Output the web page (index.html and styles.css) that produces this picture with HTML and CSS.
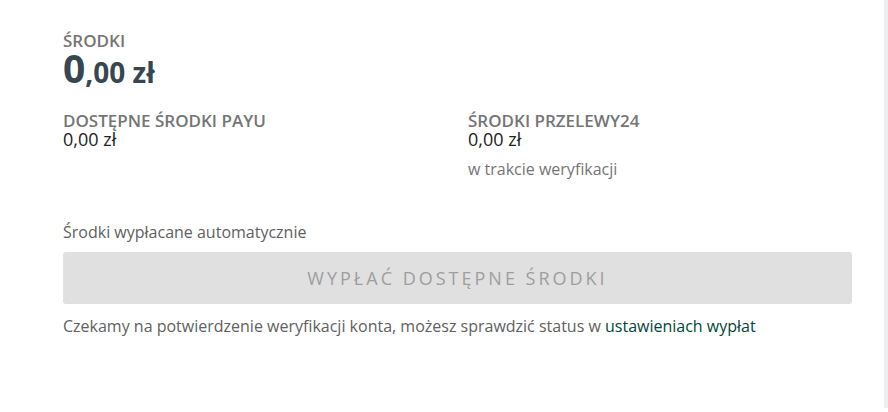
FILE: index.html
```html
<!DOCTYPE html>
<html lang="pl">
<head>
<meta charset="utf-8">
<link rel="stylesheet" href="styles.css">
</head>
<body>
<div class="page">
  <main class="panel">
    <section class="total">
      <div class="label">ŚRODKI</div>
      <div class="amount"><span class="int">0</span><span class="frac">,00 zł</span></div>
    </section>
    <section class="sources">
      <div class="source">
        <div class="label">DOSTĘPNE ŚRODKI PAYU</div>
        <div class="value">0,00 zł</div>
      </div>
      <div class="source">
        <div class="label">ŚRODKI PRZELEWY24</div>
        <div class="value">0,00 zł</div>
        <div class="status">w trakcie weryfikacji</div>
      </div>
    </section>
    <p class="auto">Środki wypłacane automatycznie</p>
    <button class="payout" disabled>WYPŁAĆ DOSTĘPNE ŚRODKI</button>
    <p class="note">Czekamy na potwierdzenie weryfikacji konta, możesz sprawdzić status w <a href="#" class="link">ustawieniach wypłat</a></p>
  </main>
  <div class="scrollbar"></div>
</div>
</body>
</html>
```

FILE: styles.css
```css
html, body {
  margin: 0;
  padding: 0;
  background: #ffffff;
}
body {
  font-family: "Open Sans", "Noto Sans", sans-serif;
  color: #212121;
}
.page {
  display: flex;
  width: 888px;
  height: 412px;
}
.panel {
  flex: 1;
  padding: 31px 32px 0 63px;
}
.scrollbar {
  width: 4px;
  height: 408px;
  background: #eceef1;
}
.label {
  font-size: 17px;
  font-weight: 600;
  color: #757575;
  line-height: 20px;
}
.amount {
  color: #37474f;
  font-weight: 700;
  font-size: 39px;
  line-height: 34px;
}
.amount .frac {
  font-size: 28px;
}
.sources {
  display: grid;
  grid-template-columns: 405px 1fr;
  margin-top: 22px;
}
.value {
  font-size: 18px;
  line-height: 16px;
  color: #212121;
}
.status {
  font-size: 16px;
  line-height: 20px;
  color: #757575;
  margin-top: 12px;
}
.auto {
  margin: 43px 0 0;
  font-size: 16px;
  line-height: 20px;
  color: #616161;
}
.payout {
  display: block;
  width: 100%;
  height: 52px;
  margin-top: 10px;
  border: none;
  border-radius: 3px;
  background: #e0e0e0;
  color: #9e9e9e;
  font-family: "Open Sans", "Noto Sans", sans-serif;
  font-size: 18px;
  letter-spacing: 3px;
  padding: 0;
}
.note {
  margin: 12px 0 0;
  font-size: 16px;
  line-height: 20px;
  color: #616161;
}
.link {
  color: #00473a;
  text-decoration: none;
}
```
